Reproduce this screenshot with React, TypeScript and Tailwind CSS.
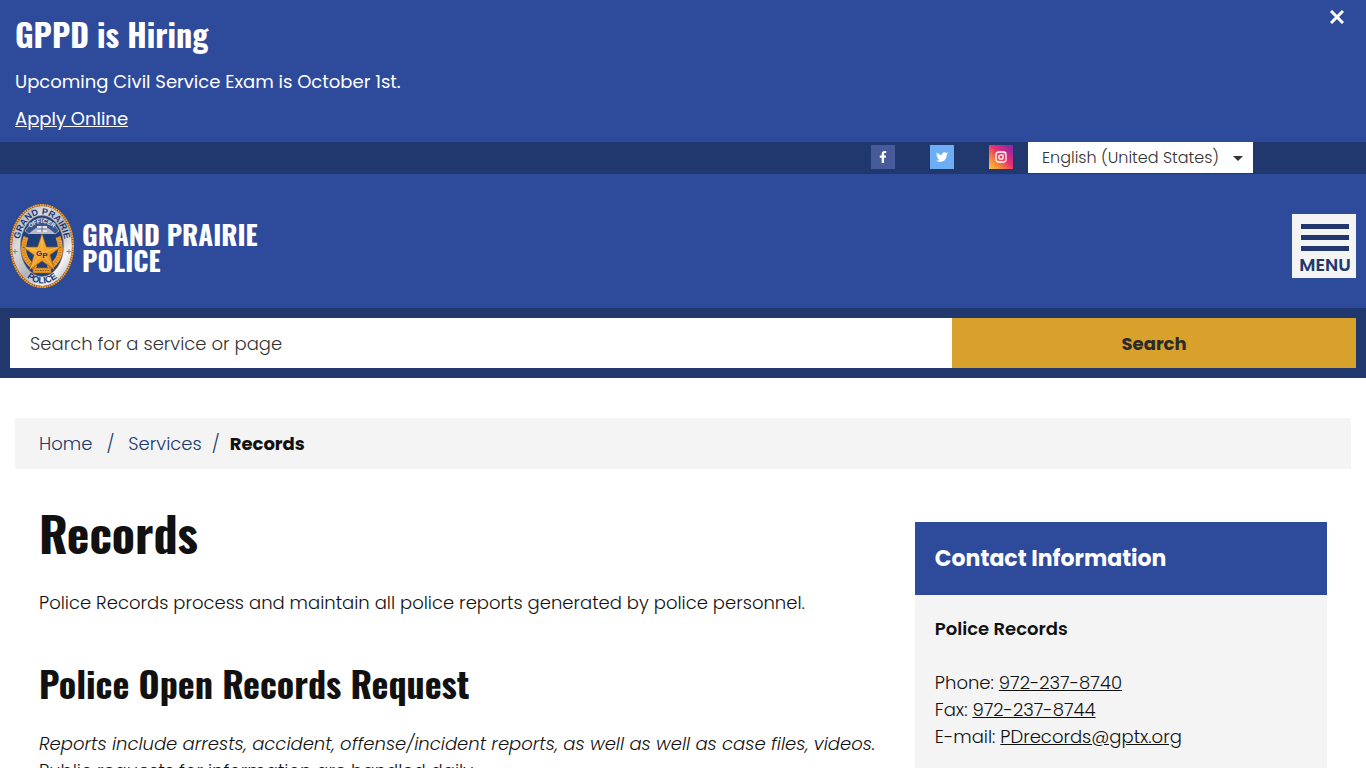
import React from "react";
import { FaFacebookF, FaTwitter } from "react-icons/fa";

const crumbs = [
    { name: "Home", href: "#home" },
    { name: "Services", href: "#services" },
];

const languages = ["English (United States)", "Español", "Tiếng Việt"];

const headingFont =
    "font-['Oswald','Liberation_Sans_Narrow','DejaVu_Sans_Condensed',sans-serif] font-bold";

function Seal() {
    return (
        <svg viewBox="0 0 66 86" className="w-[66px] h-[86px] shrink-0" aria-hidden="true">
            <defs>
                <linearGradient id="silver" x1="0" y1="0" x2="1" y2="1">
                    <stop offset="0" stopColor="#8f9196" />
                    <stop offset="0.3" stopColor="#dcdcdf" />
                    <stop offset="0.55" stopColor="#b4b5ba" />
                    <stop offset="0.75" stopColor="#f5f5f6" />
                    <stop offset="1" stopColor="#8f9095" />
                </linearGradient>
                <linearGradient id="gold" x1="0" y1="0" x2="1" y2="1">
                    <stop offset="0" stopColor="#ffc247" />
                    <stop offset="1" stopColor="#e58a14" />
                </linearGradient>
                <path id="arcTop" d="M10 44 A23 32.500 0 0 1 56 44" />
                <path id="arcBottom" d="M5 43 A28 37.500 0 0 0 61 43" />
                <path id="arcOfficer" d="M19 27 Q33 13 47 27" />
            </defs>
            <ellipse cx="33" cy="43" rx="31.500" ry="41.500" fill="url(#silver)" />
            <ellipse cx="33" cy="43" rx="31" ry="41" fill="none" stroke="#7b4a2b" strokeWidth="2.200" />
            <ellipse
                cx="33"
                cy="43"
                rx="31"
                ry="41"
                fill="none"
                stroke="#f0a33a"
                strokeWidth="2"
                strokeDasharray="1.700 0.700"
            />
            <ellipse cx="33" cy="43" rx="21.500" ry="30.500" fill="#1f3f7c" stroke="#8c7a6a" strokeWidth="0.600" />
            <path d="M16 28 Q33 2 50 28 L46 31 Q33 17 20 31 Z" fill="#3a5690" stroke="#b9bcc4" strokeWidth="0.800" />
            <path d="M20 31 Q33 17 46 31 Z" fill="#b9bcc4" />
            <rect x="28" y="23" width="10" height="6" fill="#e4e6ea" />
            <path d="M28 26 H38 M33 23 V29" stroke="#5c6b8c" />
            <path
                d="M17 34 C11 49 17 60 27 65 M49 34 C55 49 49 60 39 65"
                fill="none"
                stroke="#ee9c2b"
                strokeWidth="5"
            />
            <path
                d="M17 34 C11 49 17 60 27 65 M49 34 C55 49 49 60 39 65"
                fill="none"
                stroke="#b9741f"
                strokeWidth="3"
                strokeDasharray="0.600 2"
            />
            <path
                d="M33 31 L37.500 44 H52 L41 52 L45.500 67 L33 58 L20.500 67 L25 52 L14 44 H28.500 Z"
                fill="url(#gold)"
                stroke="#925817"
                strokeWidth="0.700"
            />
            <path
                d="M33 32 V50 L50 44 M33 50 L45 65 M33 50 L21 65 M33 50 L16 44"
                stroke="#ffd57c"
                strokeWidth="0.500"
                fill="none"
            />
            <rect x="24" y="65" width="18" height="5" fill="#e9992b" stroke="#a5691f" strokeWidth="0.600" />
            <path d="M26 67.500 H40" stroke="#8e591c" strokeDasharray="1.500 1" />
            <text x="27" y="53" className="font-['Liberation_Sans',sans-serif] font-bold text-[8px]" fill="#173878">
                G<tspan dy="2">P</tspan>
            </text>
            <text className="font-['Liberation_Sans',sans-serif] font-bold text-[9px]" fill="#183a7a" textAnchor="middle">
                <textPath href="#arcTop" startOffset="50%">GRAND PRAIRIE</textPath>
            </text>
            <text className="font-['Liberation_Sans',sans-serif] font-bold text-[9px]" fill="#183a7a" textAnchor="middle">
                <textPath href="#arcBottom" startOffset="50%">POLICE</textPath>
            </text>
            <text className="font-['Liberation_Sans',sans-serif] font-bold text-[6px]" fill="#e4e6ea" textAnchor="middle">
                <textPath href="#arcOfficer" startOffset="50%">OFFICER</textPath>
            </text>
            <path d="M6 46 V51 M4 48.500 H8.500 M60 46 V51 M57.500 48.500 H62" stroke="#85868b" />
        </svg>
    );
}

function Banner({ onClose }: { onClose: () => void }) {
    return (
        <section className="flex items-start justify-between bg-[#2e4b9b] text-white px-[15px] pt-[14px] pb-[10px]">
            <div>
                <h2 className={`${headingFont} text-[32px] leading-[40px]`}>GPPD is Hiring</h2>
                <p className="mt-[14px] leading-[27px] font-normal">Upcoming Civil Service Exam is October 1st.</p>
                <p className="mt-[10px] leading-[27px] font-normal">
                    <a href="#apply" className="underline">Apply Online</a>
                </p>
            </div>
            <button type="button" aria-label="Close" onClick={onClose} className="-mt-1 mr-[7px]">
                <svg viewBox="0 0 14 14" className="size-[14px]" stroke="#fff" strokeWidth="3">
                    <path d="M1 1 L13 13 M13 1 L1 13" />
                </svg>
            </button>
        </section>
    );
}

function TopStrip() {
    const [language, setLanguage] = React.useState<string>(languages[0]);
    return (
        <div className="flex justify-end h-8 bg-[#20386d] pr-[113px]">
            <div className="flex gap-[35px] pt-[3px] mr-[15px] text-white">
                <a href="#facebook" aria-label="Facebook" className="flex size-6 items-center justify-center bg-[#475a9a]">
                    <FaFacebookF className="size-3" />
                </a>
                <a href="#twitter" aria-label="Twitter" className="flex size-6 items-center justify-center bg-[#6cadf3]">
                    <FaTwitter className="size-3" />
                </a>
                <a
                    href="#instagram"
                    aria-label="Instagram"
                    className="flex size-6 items-center justify-center bg-[linear-gradient(45deg,#fdc840_0%,#f98a3c_25%,#e8306d_55%,#a1269c_85%,#7b2bb5_100%)]"
                >
                    <svg viewBox="0 0 12 12" className="size-3" fill="none" stroke="#fff" strokeWidth="1.300">
                        <rect x="1" y="1" width="10" height="10" rx="2.500" />
                        <circle cx="6" cy="6" r="2.200" />
                        <circle cx="8.800" cy="3.200" r="0.600" fill="#fff" stroke="none" />
                    </svg>
                </a>
            </div>
            <div className="relative w-[225px] h-[31px]">
                <select
                    aria-label="Language"
                    value={language}
                    onChange={(e) => setLanguage(e.currentTarget.value)}
                    className="size-full appearance-none bg-white pl-[14px] text-base font-light text-[#333]"
                >
                    {languages.map((name) => (
                        <option key={name}>{name}</option>
                    ))}
                </select>
                <svg
                    viewBox="0 0 10 5"
                    className="absolute right-[10px] top-[14px] w-[10px] h-[5px] pointer-events-none"
                    fill="#333"
                >
                    <path d="M0 0 H10 L5 5 Z" />
                </svg>
            </div>
        </div>
    );
}

function Header() {
    return (
        <header className="flex items-center justify-between h-[134px] bg-[#2e4b9b] pl-[9px] pr-[10px]">
            <a href="#home" className="flex items-center gap-[7px] pt-[9px] text-white">
                <Seal />
                <span className={`${headingFont} text-[27px] leading-[26px] pt-[2px]`}>
                    GRAND PRAIRIE
                    <br />
                    POLICE
                </span>
            </a>
            <button
                type="button"
                className="flex flex-col items-center size-16 mt-[10px] pt-[10px] pl-[2px] bg-[#f4f4f4] text-[#20386d]"
            >
                <span className="w-12 h-[5px] bg-[#20386d]" />
                <span className="w-12 h-[5px] mt-[6px] bg-[#20386d]" />
                <span className="w-12 h-[5px] mt-[6px] bg-[#20386d]" />
                <span className="mt-[5px] leading-[18px] font-semibold">MENU</span>
            </button>
        </header>
    );
}

function Search() {
    const [query, setQuery] = React.useState<string>("");
    return (
        <form className="flex bg-[#20386d] p-[10px]" onSubmit={(e) => e.preventDefault()}>
            <input
                type="search"
                aria-label="Search for a service or page"
                placeholder="Search for a service or page"
                value={query}
                onChange={(e) => setQuery(e.currentTarget.value)}
                className="w-[70%] h-[50px] px-5 bg-white font-light placeholder:text-[#333]"
            />
            <button type="submit" className="w-[30%] bg-[#d8a12c] font-bold text-[#2b2b2b]">
                Search
            </button>
        </form>
    );
}

function Breadcrumb() {
    return (
        <nav aria-label="Breadcrumb" className="flex items-center h-[51px] px-6 bg-[#f4f4f4] text-[#20386d]">
            {crumbs.map((crumb, i) => (
                <React.Fragment key={crumb.name}>
                    <a href={crumb.href}>{crumb.name}</a>
                    <span className={i === 0 ? "mx-[14px]" : "mx-[10px]"}>/</span>
                </React.Fragment>
            ))}
            <span className="font-bold text-[#111]">Records</span>
        </nav>
    );
}

function ContactCard() {
    return (
        <aside className="w-[32%] mt-[53px] bg-[#f4f4f4]">
            <h2 className="px-5 bg-[#2e4b9b] text-white text-[22px] leading-[73px] font-bold">
                Contact Information
            </h2>
            <div className="px-5 py-5 leading-[27px]">
                <p className="font-semibold">Police Records</p>
                <p className="mt-[27px]">
                    Phone: <a href="tel:972-237-8740" className="underline">972-237-8740</a>
                    <br />
                    Fax: <a href="tel:972-237-8744" className="underline">972-237-8744</a>
                    <br />
                    E-mail: <a href="mailto:PDrecords@gptx.org" className="underline">PDrecords@gptx.org</a>
                </p>
            </div>
        </aside>
    );
}

export default function App() {
    const [showBanner, setShowBanner] = React.useState<boolean>(true);

    return (
        <div className="bg-white font-['Poppins','Inter',sans-serif] text-[18px] font-light text-[#111]">
            {showBanner && <Banner onClose={() => setShowBanner(false)} />}
            <TopStrip />
            <Header />
            <Search />
            <div className="mx-[15px] mt-10">
                <Breadcrumb />
                <div className="flex items-start justify-between px-6">
                    <main className="w-[67%] pt-[34px]">
                        <h1 className={`${headingFont} text-[48px] leading-[60px]`}>Records</h1>
                        <p className="mt-[26px] leading-[27px]">
                            Police Records process and maintain all police reports generated by police personnel.
                        </p>
                        <h2 className={`${headingFont} text-[36px] leading-[48px] mt-[43px]`}>
                            Police Open Records Request
                        </h2>
                        <p className="mt-[23px] leading-[27px]">
                            <em>
                                Reports include arrests, accident, offense/incident reports, as well as well as case files, videos.
                            </em>
                            <br />
                            Public requests for information are handled daily.
                        </p>
                    </main>
                    <ContactCard />
                </div>
            </div>
        </div>
    );
}
